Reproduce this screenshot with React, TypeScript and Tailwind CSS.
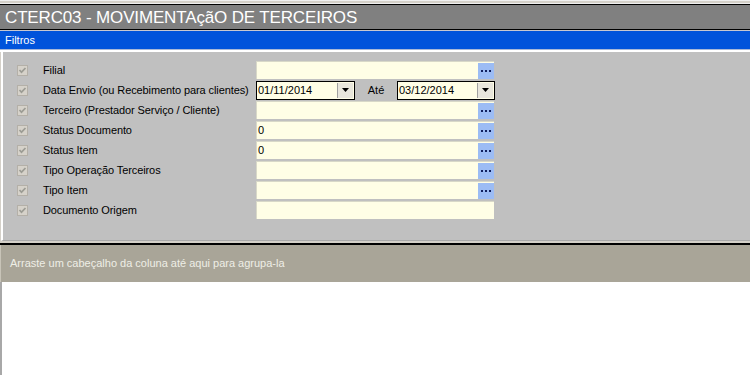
import React from "react"

const font = { fontFamily: '"Liberation Sans", Arial, sans-serif' }

const rows: { label: string; kind: "lookup" | "date" | "plain"; value?: string }[] = [
  { label: "Filial", kind: "lookup" },
  { label: "Data Envio (ou Recebimento para clientes)", kind: "date" },
  { label: "Terceiro (Prestador Serviço / Cliente)", kind: "lookup" },
  { label: "Status Documento", kind: "lookup", value: "0" },
  { label: "Status Item", kind: "lookup", value: "0" },
  { label: "Tipo Operação Terceiros", kind: "lookup" },
  { label: "Tipo Item", kind: "lookup" },
  { label: "Documento Origem", kind: "plain" },
]

function Check() {
  return (
    <div className="w-[11px] h-[11px] border border-[#b4b0a8] bg-[#d6d2ca] flex items-center justify-center">
      <svg width="9" height="9" viewBox="0 0 9 9">
        <path d="M1.5 4 L3.5 6.2 L7.5 2" stroke="#9c9c94" strokeWidth="1.7" fill="none" />
      </svg>
    </div>
  )
}

function Dots() {
  return (
    <div className="w-[16px] h-[16px] bg-[#9cbcf4] flex items-center justify-center gap-[2px]">
      <span className="w-[2px] h-[2px] bg-[#102060]" />
      <span className="w-[2px] h-[2px] bg-[#102060]" />
      <span className="w-[2px] h-[2px] bg-[#102060]" />
    </div>
  )
}

function DateBox({ value, width }: { value: string; width: string }) {
  return (
    <div className={`${width} h-[19px] border border-black bg-[#fffee6] flex items-center`}>
      <span className="flex-1 pl-[1px] text-[11px] text-black">{value}</span>
      <div className="w-[16px] h-[15px] mr-[1px] bg-[#e8e6dc] border-l border-[#a0a0a0] flex items-center justify-center">
        <svg width="7" height="4" viewBox="0 0 7 4">
          <path d="M0 0 H7 L3.5 4 Z" fill="#000" />
        </svg>
      </div>
    </div>
  )
}

export default function App() {
  return (
    <div className="w-[750px] h-[375px] overflow-hidden bg-[#d4d0c8] flex flex-col" style={font}>
      <div className="h-[4px] border-t border-[#f0f0f0] border-b border-[#a0a0a0] bg-[#d4d0c8]" />
      <div className="h-[26px] bg-[#808080] border-y border-black flex items-center pl-[5px]">
        <span className="text-white text-[17px] leading-none tracking-[-0.15px]">CTERC03 - MOVIMENTAçãO DE TERCEIROS</span>
      </div>
      <div className="h-[1px] bg-[#c8c8d0]" />
      <div className="h-[18px] bg-[#0053db] flex items-center pl-[5px]">
        <span className="text-white text-[11px]">Filtros</span>
      </div>
      <div className="h-[1px] bg-[#a8b8d8]" />
      <div className="h-[2px] bg-white" />
      <div className="h-[189px] bg-[#c0c0c0] border-l-2 border-white ml-[1px] border-b border-b-[#a8a8a8] pt-[8px] flex flex-col">
        {rows.map((r) => (
          <div key={r.label} className="h-[20px] flex items-center">
            <div className="w-[40px] pl-[14px]">
              <Check />
            </div>
            <span className="w-[213px] text-[11px] text-black whitespace-nowrap tracking-[-0.1px]">{r.label}</span>
            {r.kind === "date" ? (
              <div className="flex items-center">
                <DateBox value="01/11/2014" width="w-[99px]" />
                <span className="w-[42px] text-center text-[11px] text-black">Até</span>
                <DateBox value="03/12/2014" width="w-[98px]" />
              </div>
            ) : (
              <div className="w-[238px] h-[18px] bg-[#fffee6] border-t border-l border-[#d8d8c8] flex items-center">
                <span className="flex-1 pl-[1px] text-[11px] text-black">{r.value ?? ""}</span>
                {r.kind === "lookup" && <Dots />}
              </div>
            )}
          </div>
        ))}
      </div>
      <div className="h-[2px] bg-[#d4d0c8]" />
      <div className="h-[2px] bg-black" />
      <div className="h-[37px] bg-[#a9a598] border-l border-[#c8c4b8] flex items-center pl-[9px]">
        <span className="text-[11px] text-[#eeeee6]">Arraste um cabeçalho da coluna até aqui para agrupa-la</span>
      </div>
      <div className="flex-1 bg-white border-l-2 border-[#a8a8a8]" />
    </div>
  )
}
